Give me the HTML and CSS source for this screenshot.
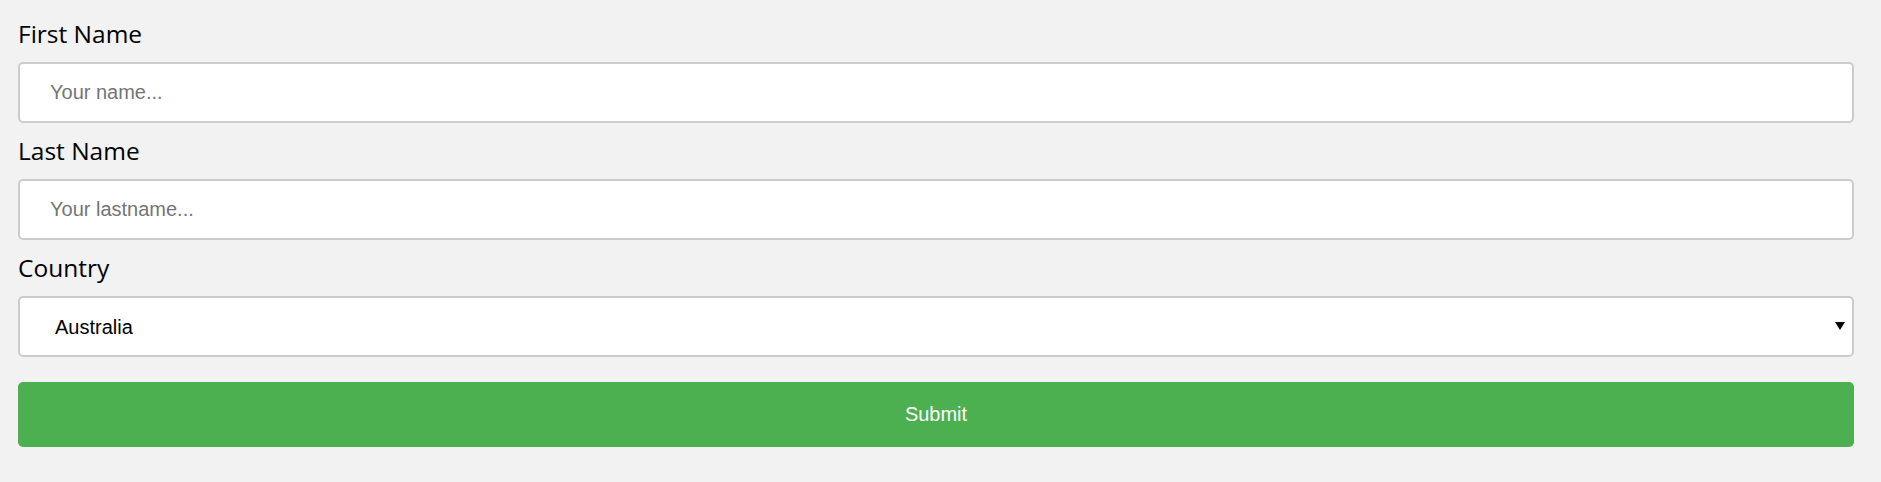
FILE: index.html
```html
<!DOCTYPE html>
<html lang="en">
<head>
    <meta charset="UTF-8">
    <meta name="viewport" content="width=device-width, initial-scale=1.0">
    <title>Contact Form</title>
    <link rel="stylesheet" href="styles.css">
</head>
<body>
    <div class="container">
        <form action="#">
            <label for="fname">First Name</label>
            <input type="text" id="fname" name="firstname" placeholder="Your name...">

            <label for="lname">Last Name</label>
            <input type="text" id="lname" name="lastname" placeholder="Your lastname...">

            <label for="country">Country</label>
            <div class="select-wrap">
                <select id="country" name="country">
                    <option value="australia">Australia</option>
                    <option value="canada">Canada</option>
                    <option value="usa">USA</option>
                </select>
            </div>

            <input type="submit" value="Submit">
        </form>
    </div>
</body>
</html>
```

FILE: styles.css
```css
body {
    background: #f2f2f2;
    margin: 0;
    padding: 0;
}
.container {
    padding: 17px 27px 0 18px;
}
label {
    display: block;
    font-family: 'Open Sans', 'Noto Sans', sans-serif;
    font-size: 24.5px;
    line-height: 34px;
    color: #000;
}
input[type=text], select {
    display: block;
    width: 100%;
    height: 61px;
    box-sizing: border-box;
    margin: 11px 0;
    padding: 0 30px;
    border: 2px solid #ccc;
    border-radius: 5px;
    background: #fff;
    font-family: 'Liberation Sans', Arial, sans-serif;
    font-size: 20px;
    color: #000;
    outline: none;
}
input::placeholder {
    color: #757575;
}
select {
    -webkit-appearance: none;
    appearance: none;
    padding-left: 35px;
}
.select-wrap {
    position: relative;
}
.select-wrap::after {
    content: "";
    position: absolute;
    right: 9px;
    top: 26px;
    border-left: 5px solid transparent;
    border-right: 5px solid transparent;
    border-top: 8px solid #000;
    pointer-events: none;
}
input[type=submit] {
    display: block;
    width: 100%;
    height: 65px;
    margin: 25px 0 0;
    border: none;
    border-radius: 5px;
    background: #4CAF50;
    color: #fff;
    font-family: 'Liberation Sans', Arial, sans-serif;
    font-size: 20px;
    cursor: pointer;
}
input[type=submit]:hover {
    background: #45a049;
}
```
